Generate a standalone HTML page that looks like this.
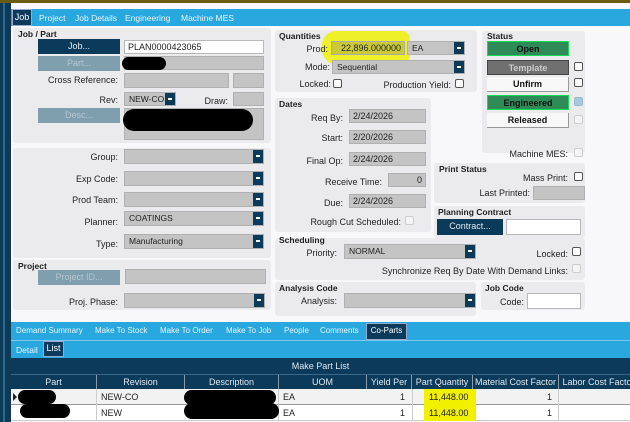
<!DOCTYPE html>
<html><head><style>
*{margin:0;padding:0;box-sizing:border-box}
body{width:630px;height:422px;overflow:hidden;background:#f8f8fa;font-family:"Liberation Sans",sans-serif;font-size:9px;color:#222;position:relative}
div,span{position:absolute}
.p{background:#ebebed;border-radius:3px}
.h{font-weight:bold;font-size:8.5px;color:#222}
.l{text-align:right;white-space:nowrap}
.i{background:#c4c4c4;border:1px solid #b0b0b0}
.w{background:#fff;border:1px solid #b8b8b8}
.s{background:#c4c4c4;border:1px solid #b0b0b0;padding-left:4px;line-height:12px;font-size:8.5px}
.s:after{content:"";position:absolute;right:0;top:0;width:10px;height:100%;background:#0c3a5a}
.s b{position:absolute;right:3px;top:5px;width:4px;height:2px;background:#fff;z-index:2}
.bt{background:#0c3a5a;color:#dfe8f0;text-align:center;line-height:15px}
.bd{background:#7f9eae;color:#b7c7d0;text-align:center;line-height:15px}
.cb{width:9px;height:9px;border:1px solid #555;border-radius:2px;background:#fff}
.cd{width:9px;height:9px;border:1px solid #ccc;border-radius:2px;background:#f4f4f4}
.st{left:487px;width:82px;height:15px;text-align:center;line-height:14px;font-weight:bold;font-size:9px}
.k{background:#000;border-radius:8px}
.tb{color:#e8f4fb;font-size:8.5px;top:0;line-height:18px;white-space:nowrap}
.g{border-right:1px solid #8a9aa6;height:100%;top:0;text-align:center}
</style></head><body>
<div style="left:0;top:0;width:630px;height:3px;background:#6b5a10"></div>
<div style="left:0;top:3px;width:11px;height:419px;background:#0e3a58"></div>
<div style="left:3px;top:3px;width:2px;height:419px;background:#2a6a90"></div>
<!-- top tabs -->
<div style="left:11px;top:9px;width:619px;height:17px;background:#29a8e0"></div>
<div style="left:12px;top:9px;width:20px;height:17px;background:#0c3a5a;border:1px solid #9ac;color:#fff;text-align:center;line-height:15px">Job</div>
<div class="tb" style="left:39px;top:9px">Project</div>
<div class="tb" style="left:75px;top:9px">Job Details</div>
<div class="tb" style="left:125px;top:9px">Engineering</div>
<div class="tb" style="left:181px;top:9px">Machine MES</div>
<!-- Job/Part -->
<div class="p" style="left:13px;top:28px;width:258px;height:115px"></div>
<div class="h" style="left:18px;top:29px">Job / Part</div>
<div class="bt" style="left:38px;top:39px;width:82px;height:15px">Job...</div>
<div class="w" style="left:124px;top:40px;width:140px;height:14px;padding-left:3px;line-height:12px">PLAN0000423065</div>
<div class="bd" style="left:38px;top:56px;width:82px;height:15px">Part...</div>
<div class="i" style="left:124px;top:56px;width:140px;height:14px"></div>
<div class="k" style="left:122px;top:57px;width:44px;height:13px"></div>
<div class="l" style="left:40px;top:75px;width:78px">Cross Reference:</div>
<div class="i" style="left:124px;top:73px;width:105px;height:15px"></div>
<div class="i" style="left:233px;top:73px;width:31px;height:15px"></div>
<div class="l" style="left:80px;top:95px;width:38px">Rev:</div>
<div class="s" style="left:124px;top:92px;width:52px;height:14px">NEW-CO<b></b></div>
<div class="l" style="left:200px;top:96px;width:28px">Draw:</div>
<div class="i" style="left:233px;top:92px;width:31px;height:14px"></div>
<div class="bd" style="left:38px;top:108px;width:82px;height:15px">Desc...</div>
<div class="i" style="left:124px;top:108px;width:140px;height:32px"></div>
<div class="k" style="left:123px;top:109px;width:130px;height:22px;border-radius:12px"></div>
<!-- second panel -->
<div class="p" style="left:13px;top:148px;width:258px;height:110px"></div>
<div class="l" style="left:40px;top:152px;width:78px">Group:</div>
<div class="s" style="left:124px;top:149px;width:140px;height:15px"><b></b></div>
<div class="l" style="left:40px;top:174px;width:78px">Exp Code:</div>
<div class="s" style="left:124px;top:171px;width:140px;height:15px"><b></b></div>
<div class="l" style="left:40px;top:195px;width:78px">Prod Team:</div>
<div class="s" style="left:124px;top:192px;width:140px;height:15px"><b></b></div>
<div class="l" style="left:40px;top:217px;width:78px">Planner:</div>
<div class="s" style="left:124px;top:211px;width:140px;height:15px">COATINGS<b></b></div>
<div class="l" style="left:40px;top:239px;width:78px">Type:</div>
<div class="s" style="left:124px;top:234px;width:140px;height:15px">Manufacturing<b></b></div>
<!-- project -->
<div class="p" style="left:13px;top:260px;width:258px;height:50px"></div>
<div class="h" style="left:18px;top:261px">Project</div>
<div class="bd" style="left:38px;top:270px;width:82px;height:15px">Project ID...</div>
<div class="i" style="left:125px;top:269px;width:141px;height:15px"></div>
<div class="l" style="left:40px;top:297px;width:78px">Proj. Phase:</div>
<div class="s" style="left:124px;top:293px;width:141px;height:15px"><b></b></div>
<!-- Quantities -->
<div class="p" style="left:275px;top:30px;width:202px;height:62px"></div>
<div class="h" style="left:279px;top:31px">Quantities</div>
<div style="left:322px;top:31px;width:88px;height:34px;background:#eef02a;border-radius:14px 8px 10px 16px"></div>
<div class="l" style="left:290px;top:44px;width:38px">Prod:</div>
<div class="i" style="left:331px;top:41px;width:74px;height:14px;text-align:right;padding-right:3px;line-height:12px;background:#c9c93a;border-color:#aaa">22,896.000000</div>
<div class="s" style="left:407px;top:41px;width:58px;height:14px">EA<b></b></div>
<div class="l" style="left:290px;top:62px;width:40px">Mode:</div>
<div class="s" style="left:332px;top:60px;width:133px;height:14px">Sequential<b></b></div>
<div class="l" style="left:295px;top:79px;width:36px">Locked:</div>
<div class="cb" style="left:333px;top:79px"></div>
<div class="l" style="left:370px;top:80px;width:81px">Production Yield:</div>
<div class="cb" style="left:455px;top:79px"></div>
<!-- Status -->
<div class="p" style="left:482px;top:31px;width:103px;height:122px"></div>
<div class="h" style="left:487px;top:31px">Status</div>
<div class="st" style="top:41px;background:#2e8b57;border:1px solid #1d5;color:#111">Open</div>
<div class="st" style="top:60px;background:#707070;border:1px solid #444;color:#ccc">Template</div>
<div class="cb" style="left:574px;top:62px"></div>
<div class="st" style="top:77px;background:#f8f8f8;border-bottom:1px solid #999;border-right:1px solid #999;color:#111">Unfirm</div>
<div class="cb" style="left:574px;top:78px"></div>
<div class="st" style="top:95px;background:#2e8b57;border:1px solid #1d5;color:#111">Engineered</div>
<div class="cd" style="left:574px;top:97px;background:#a8c8e0;border-color:#9bc"></div>
<div class="st" style="top:113px;background:#f8f8f8;border-bottom:1px solid #999;border-right:1px solid #999;color:#111">Released</div>
<div class="cd" style="left:574px;top:115px"></div>
<div class="l" style="left:500px;top:149px;width:68px">Machine MES:</div>
<div class="cd" style="left:574px;top:148px"></div>
<!-- Dates -->
<div class="p" style="left:275px;top:98px;width:156px;height:134px"></div>
<div class="h" style="left:279px;top:99px">Dates</div>
<div class="l" style="left:300px;top:113px;width:43px">Req By:</div>
<div class="i" style="left:349px;top:109px;width:77px;height:14px;padding-left:3px;line-height:12px">2/24/2026</div>
<div class="l" style="left:300px;top:133px;width:43px">Start:</div>
<div class="i" style="left:349px;top:130px;width:77px;height:14px;padding-left:3px;line-height:12px">2/20/2026</div>
<div class="l" style="left:290px;top:156px;width:53px">Final Op:</div>
<div class="i" style="left:349px;top:152px;width:77px;height:14px;padding-left:3px;line-height:12px">2/24/2026</div>
<div class="l" style="left:300px;top:177px;width:82px">Receive Time:</div>
<div class="i" style="left:388px;top:173px;width:38px;height:14px;text-align:right;padding-right:3px;line-height:12px">0</div>
<div class="l" style="left:300px;top:198px;width:43px">Due:</div>
<div class="i" style="left:349px;top:194px;width:77px;height:14px;padding-left:3px;line-height:12px">2/24/2026</div>
<div class="l" style="left:300px;top:217px;width:101px">Rough Cut Scheduled:</div>
<div class="cd" style="left:405px;top:216px"></div>
<!-- Print status -->
<div class="p" style="left:434px;top:163px;width:151px;height:40px"></div>
<div class="h" style="left:439px;top:164px">Print Status</div>
<div class="l" style="left:500px;top:173px;width:68px">Mass Print:</div>
<div class="cb" style="left:574px;top:172px"></div>
<div class="l" style="left:460px;top:188px;width:70px">Last Printed:</div>
<div class="i" style="left:533px;top:186px;width:52px;height:14px"></div>
<!-- Planning -->
<div class="p" style="left:434px;top:206px;width:151px;height:32px"></div>
<div class="h" style="left:438px;top:207px">Planning Contract</div>
<div class="bt" style="left:437px;top:219px;width:66px;height:16px">Contract...</div>
<div class="w" style="left:506px;top:219px;width:75px;height:16px"></div>
<!-- Scheduling -->
<div class="p" style="left:275px;top:238px;width:310px;height:42px"></div>
<div class="h" style="left:279px;top:235px">Scheduling</div>
<div class="l" style="left:290px;top:248px;width:47px">Priority:</div>
<div class="s" style="left:344px;top:244px;width:132px;height:15px">NORMAL<b></b></div>
<div class="l" style="left:500px;top:249px;width:68px">Locked:</div>
<div class="cb" style="left:572px;top:247px"></div>
<div class="l" style="left:370px;top:266px;width:198px">Synchronize Req By Date With Demand Links:</div>
<div class="cd" style="left:572px;top:264px"></div>
<!-- Analysis -->
<div class="p" style="left:275px;top:282px;width:201px;height:34px"></div>
<div class="h" style="left:279px;top:283px">Analysis Code</div>
<div class="l" style="left:290px;top:296px;width:47px">Analysis:</div>
<div class="s" style="left:344px;top:293px;width:132px;height:15px"><b></b></div>
<div class="p" style="left:481px;top:282px;width:104px;height:28px"></div>
<div class="h" style="left:485px;top:283px">Job Code</div>
<div class="l" style="left:490px;top:297px;width:34px">Code:</div>
<div class="w" style="left:527px;top:293px;width:54px;height:16px"></div>
<!-- lower tabs -->
<div style="left:11px;top:322px;width:619px;height:36px;background:#29a8e0"></div>
<div style="left:11px;top:340px;width:619px;height:1px;background:#7cc8ee"></div>
<div class="tb" style="left:16px;top:322px;font-size:8px">Demand Summary</div>
<div class="tb" style="left:95px;top:322px;font-size:8px">Make To Stock</div>
<div class="tb" style="left:160px;top:322px;font-size:8px">Make To Order</div>
<div class="tb" style="left:226px;top:322px;font-size:8px">Make To Job</div>
<div class="tb" style="left:284px;top:322px;font-size:8px">People</div>
<div class="tb" style="left:320px;top:322px;font-size:8px">Comments</div>
<div style="left:366px;top:323px;width:41px;height:17px;background:#0c3a5a;border:1px solid #9ac;color:#fff;text-align:center;line-height:14px;font-size:8px">Co-Parts</div>
<div class="tb" style="left:16px;top:341px">Detail</div>
<div style="left:43px;top:341px;width:21px;height:16px;background:#0c3a5a;border:1px solid #9ac;color:#fff;text-align:center;line-height:13px">List</div>
<!-- grid -->
<div style="left:11px;top:358px;width:619px;height:16px;background:#0c3a5a;color:#dfe8f0;text-align:center;line-height:16px">Make Part List</div>
<div style="left:11px;top:374px;width:619px;height:15px;background:#0c3a5a;color:#dfe8f0;border-top:1px solid #3a6a8a;line-height:14px">
<div class="g" style="left:0;width:86px">Part</div>
<div class="g" style="left:86px;width:88px">Revision</div>
<div class="g" style="left:174px;width:94px">Description</div>
<div class="g" style="left:268px;width:88px">UOM</div>
<div class="g" style="left:356px;width:45px">Yield Per</div>
<div class="g" style="left:401px;width:61px">Part Quantity</div>
<div class="g" style="left:462px;width:86px">Material Cost Factor</div>
<div class="g" style="left:548px;width:80px;white-space:nowrap;overflow:hidden">Labor Cost Factor</div>
</div>
<div style="left:11px;top:389px;width:619px;height:16px;background:#f2f2f2;border-bottom:1px solid #999"></div>
<div style="left:11px;top:405px;width:619px;height:16px;background:#fff;border-bottom:1px solid #ccc"></div>
<div style="left:13px;top:393px;width:0;height:0;border-left:4px solid #222;border-top:4px solid transparent;border-bottom:4px solid transparent"></div>
<div style="left:101px;top:392px">NEW-CO</div><div style="left:101px;top:408px">NEW</div>
<div style="left:283px;top:392px">EA</div><div style="left:283px;top:408px">EA</div>
<div style="left:400px;top:392px">1</div><div style="left:400px;top:408px">1</div>
<div style="left:424px;top:389px;width:52px;height:32px;background:#f0f000"></div>
<div style="left:429px;top:392px">11,448.00</div><div style="left:429px;top:408px">11,448.00</div>
<div style="left:547px;top:392px">1</div><div style="left:547px;top:408px">1</div>
<div style="left:96px;top:389px;width:1px;height:32px;background:#ccc"></div>
<div style="left:278px;top:389px;width:1px;height:32px;background:#ccc"></div>
<div style="left:412px;top:389px;width:1px;height:32px;background:#ccc"></div>
<div style="left:558px;top:389px;width:1px;height:32px;background:#ccc"></div>
<div class="k" style="left:18px;top:390px;width:38px;height:14px"></div>
<div class="k" style="left:20px;top:404px;width:50px;height:14px"></div>
<div class="k" style="left:184px;top:390px;width:92px;height:15px"></div>
<div class="k" style="left:184px;top:403px;width:95px;height:16px"></div>
</body></html>
